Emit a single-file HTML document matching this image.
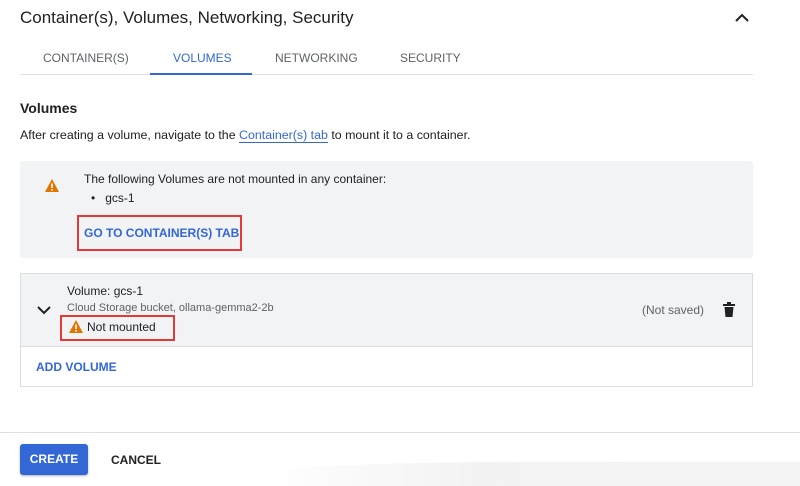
<!DOCTYPE html>
<html><head><style>
*{margin:0;padding:0;box-sizing:border-box}
body{width:800px;height:486px;background:#fff;font-family:"Liberation Sans",Arial,sans-serif;color:#202124;position:relative;overflow:hidden}
.a{position:absolute;white-space:nowrap}
</style></head><body>
<div class="a" style="left:20px;top:8px;font-size:17px;">Container(s), Volumes, Networking, Security</div>
<svg class="a" style="left:734px;top:12px" width="16" height="12" viewBox="0 0 16 12"><path d="M2 9 L8 3 L14 9" fill="none" stroke="#202124" stroke-width="2"/></svg>
<div class="a" style="left:20px;top:74px;width:733px;height:1px;background:#e0e0e0"></div>
<div class="a" style="left:43px;top:51px;font-size:12px;color:#5f6368">CONTAINER(S)</div>
<div class="a" style="left:173px;top:51px;font-size:12px;color:#3367d6">VOLUMES</div>
<div class="a" style="left:150px;top:73px;width:102px;height:2px;background:#3367d6"></div>
<div class="a" style="left:275px;top:51px;font-size:12px;color:#5f6368">NETWORKING</div>
<div class="a" style="left:400px;top:51px;font-size:12px;color:#5f6368">SECURITY</div>
<div class="a" style="left:20px;top:100px;font-size:14px;font-weight:bold;">Volumes</div>
<div class="a" style="left:20px;top:128px;font-size:12.4px;">After creating a volume, navigate to the <span style="color:#3367d6;border-bottom:1px solid #3367d6">Container(s) tab</span> to mount it to a container.</div>
<div class="a" style="left:20px;top:161px;width:733px;height:97px;background:#f1f3f4;border-radius:3px"></div>
<svg class="a" style="left:45px;top:179px" width="14" height="13" viewBox="0 0 14 13"><path d="M7 0 L14 13 L0 13Z" fill="#e37400"/><rect x="6.2" y="4.5" width="1.6" height="4.5" fill="#fff"/><rect x="6.2" y="10" width="1.6" height="1.6" fill="#fff"/></svg>
<div class="a" style="left:84px;top:172px;font-size:12px;">The following Volumes are not mounted in any container:</div>
<div class="a" style="left:91px;top:191px;font-size:12px;">•&nbsp;&nbsp;&nbsp;gcs-1</div>
<div class="a" style="left:77px;top:215px;width:165px;height:36px;border:2px solid #e53935"></div>
<div class="a" style="left:84px;top:226px;font-size:12px;color:#3367d6;font-weight:bold">GO TO CONTAINER(S) TAB</div>
<div class="a" style="left:20px;top:273px;width:733px;height:114px;border:1px solid #dadce0"></div>
<div class="a" style="left:21px;top:274px;width:731px;height:73px;background:#f1f3f4;border-bottom:1px solid #dadce0"></div>
<svg class="a" style="left:37px;top:305px" width="14" height="10" viewBox="0 0 14 10"><path d="M1 2 L7 8 L13 2" fill="none" stroke="#202124" stroke-width="2"/></svg>
<div class="a" style="left:67px;top:284px;font-size:12px;">Volume: gcs-1</div>
<div class="a" style="left:67px;top:302px;font-size:11px;color:#5f6368">Cloud Storage bucket, ollama-gemma2-2b</div>
<div class="a" style="left:60px;top:315px;width:115px;height:26px;border:2px solid #e53935"></div>
<svg class="a" style="left:69px;top:320px" width="14" height="13" viewBox="0 0 14 13"><path d="M7 0 L14 13 L0 13Z" fill="#e37400"/><rect x="6.2" y="4.5" width="1.6" height="4.5" fill="#fff"/><rect x="6.2" y="10" width="1.6" height="1.6" fill="#fff"/></svg>
<div class="a" style="left:87px;top:320px;font-size:12px;">Not mounted</div>
<div class="a" style="left:642px;top:303px;font-size:12px;color:#5f6368">(Not saved)</div>
<svg class="a" style="left:723px;top:302px" width="12" height="15" viewBox="0 0 12 15"><rect x="0" y="2" width="12" height="2" fill="#202124"/><rect x="4" y="0" width="4" height="2" fill="#202124"/><path d="M1.5 5 H10.5 L9.5 15 H2.5Z" fill="#202124"/></svg>
<div class="a" style="left:36px;top:360px;font-size:12px;color:#3367d6;font-weight:bold">ADD VOLUME</div>
<div class="a" style="left:0;top:432px;width:800px;height:1px;background:#e0e0e0"></div>
<div class="a" style="left:20px;top:444px;width:68px;height:31px;background:#3367d6;border-radius:3px;box-shadow:0 1px 2px rgba(0,0,0,.3);color:#fff;font-size:12px;font-weight:bold;text-align:center;line-height:31px">CREATE</div>
<div class="a" style="left:111px;top:453px;font-size:12px;font-weight:bold">CANCEL</div>
<div class="a" style="left:260px;top:462px;width:540px;height:24px;background:linear-gradient(90deg,rgba(255,255,255,0),rgba(230,230,230,.5) 40%,rgba(240,240,240,.7));border-radius:50% 0 0 0"></div>
</body></html>
